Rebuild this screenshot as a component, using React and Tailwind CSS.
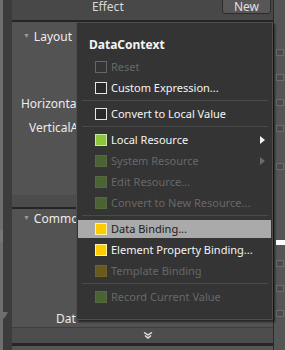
const MENU = [
  { label: 'Reset', box: 'reset', off: true },
  { label: 'Custom Expression...', box: 'white' },
  { sep: true },
  { label: 'Convert to Local Value', box: 'white' },
  { sep: true },
  { label: 'Local Resource', box: 'green', sub: true },
  { label: 'System Resource', box: 'greenOff', off: true, sub: true },
  { label: 'Edit Resource...', box: 'greenOff', off: true },
  { label: 'Convert to New Resource...', box: 'greenOff', off: true },
  { sep: true },
  { label: 'Data Binding...', box: 'yellow', active: true },
  { label: 'Element Property Binding...', box: 'yellow' },
  { label: 'Template Binding', box: 'yellowOff', off: true },
  { sep: true },
  { label: 'Record Current Value', box: 'greenOff', off: true },
]

const BOXES = {
  reset: 'border-[#666666] bg-transparent',
  white: 'border-[#e6e6e6] bg-[#2a2a2a]',
  green: 'border-[#c9e8a4] bg-[#8cc63f]',
  greenOff: 'border-[#56693f] bg-[#4b6334]',
  yellow: 'border-[#fff1b0] bg-[#ffcc00]',
  yellowOff: 'border-[#6f6424] bg-[#675a1c]',
}

function Arrow({ off }) {
  return (
    <svg width="5" height="8" viewBox="0 0 5 8" className="absolute left-[182px] top-1/2 -translate-y-1/2">
      <path d="M0 0 L5 4 L0 8 Z" fill={off ? '#6a6a6a' : '#f2f2f2'} />
    </svg>
  )
}

function MenuRow({ item }) {
  if (item.sep) {
    return (
      <div className="h-[5px] flex items-center pl-[5px] pr-[4px]">
        <div className="h-px w-full bg-[#4a4a4a]" />
      </div>
    )
  }
  return (
    <div className="h-[21px] flex items-center pl-px pr-px">
      <div className={`relative w-full h-[18px] flex items-center pl-[17px] ${item.active ? 'bg-[#aaaaaa]' : ''}`}>
        <span className={`w-[12px] h-[12px] border shrink-0 ${BOXES[item.box]}`} />
        <span className={`ml-[4px] text-[11px] leading-none whitespace-nowrap ${item.active ? 'text-[#1c1c1c]' : item.off ? 'text-[#686868]' : 'text-[#f4f4f4]'}`}>
          {item.label}
        </span>
        {item.sub && <Arrow off={item.off} />}
      </div>
    </div>
  )
}

function Tick({ className = '' }) {
  return <div className={`w-[8px] h-[7px] border border-[#6c6c6c] bg-[#4a4a4a] ${className}`} />
}

export default function App() {
  return (
    <div className="relative w-[285px] h-[350px] overflow-hidden flex bg-[#535353] font-['Noto_Sans',sans-serif] text-[11px] text-[#ececec]">
      {/* left edge */}
      <div className="w-[3px] bg-[#6e6e6e] relative">
        <div className="absolute left-0 top-[230px] w-[4px] h-[12px] bg-[#777777]" />
      </div>
      <div className="w-[9px] bg-[#3c3c3c] relative">
        <div className="absolute -left-[3px] top-[312px] w-0 h-0 border-l-[4px] border-r-[4px] border-t-[7px] border-l-transparent border-r-transparent border-t-[#6e6e6e]" />
      </div>

      {/* property panel */}
      <div className="w-[263px] flex flex-col">
        <div className="h-[20px] bg-[#484848] relative flex items-start">
          <span className="ml-[80px] mt-[1px] text-[12px] leading-none text-[#d8d8d8]">Effect</span>
          <div className="ml-auto -mt-[3px] w-[49px] h-[17px] rounded-[3px] border border-[#2c2c2c] bg-[#575757] flex items-center justify-center pt-[2px] text-[#e0e0e0] text-[12px] leading-none">
            New
          </div>
          <div className="w-[2px]" />
        </div>
        <div className="h-[2px] bg-[#252525]" />

        <div className="h-[173px] bg-[#535353] flex flex-col">
          <div className="h-[21px] flex items-end pl-[11px]">
            <span className="text-[7px] text-[#9a9a9a] mr-[4px] mb-[2px]">▼</span>
            <span className="text-[12px] leading-none">Layout</span>
          </div>
          <div className="mt-[55px] pl-[9px] text-[12px] leading-none">Horizontal</div>
          <div className="mt-[12px] pl-[17px] text-[12px] leading-none">VerticalA</div>
        </div>
        <div className="h-[12px] bg-[#4c4c4c]" />
        <div className="h-[2px] bg-[#252525]" />

        <div className="h-[118px] bg-[#535353] flex flex-col">
          <div className="h-[16px] flex items-end pl-[11px]">
            <span className="text-[7px] text-[#9a9a9a] mr-[4px] mb-[2px]">▼</span>
            <span className="text-[12px] leading-none">Commo</span>
          </div>
          <div className="mt-[88px] pl-[44px] text-[12px] leading-none">Dat</div>
        </div>
        <div className="h-px bg-[#3e3e3e]" />
        <div className="h-[15px] bg-[#4d4d4d] flex items-center justify-center">
          <svg width="10" height="7" viewBox="0 0 10 7" className="ml-[12px]">
            <path d="M1 0.5 L5 3 L9 0.5" stroke="#e8e8e8" strokeWidth="1.4" fill="none" />
            <path d="M2 3.5 L5 6 L8 3.5" stroke="#e8e8e8" strokeWidth="1.4" fill="none" />
          </svg>
        </div>
        <div className="h-[3px] bg-[#262626]" />
        <div className="flex-1 bg-[#555555]" />
      </div>

      {/* right column */}
      <div className="flex-1 border-l border-[#2b2b2b] bg-[#555555] flex flex-col pl-[2px]">
        <div className="mt-[49px]"><Tick /></div>
        <div className="mt-[18px]"><Tick /></div>
        <div className="mt-[18px]"><Tick /></div>
        <div className="mt-[19px]"><Tick /></div>
        <div className="mt-[31px]"><Tick /></div>
        <div className="mt-[70px] w-[9px] h-[5px] bg-white" />
        <div className="mt-[15px]"><Tick /></div>
        <div className="mt-[18px]"><Tick /></div>
        <div className="mt-[18px]"><Tick /></div>
      </div>

      {/* context menu */}
      <div className="absolute left-[76px] top-[22px] w-[197px] h-[298px] bg-[#343434] border border-[#4e4e4e] shadow-[2px_2px_2px_rgba(0,0,0,0.55)] flex flex-col">
        <div className="h-[33px] flex items-end pl-[12px] pb-[5px]">
          <span className="text-[12px] font-bold leading-none text-[#f4f4f4]">DataContext</span>
        </div>
        {MENU.map((item, i) => (
          <MenuRow key={i} item={item} />
        ))}
      </div>
    </div>
  )
}
